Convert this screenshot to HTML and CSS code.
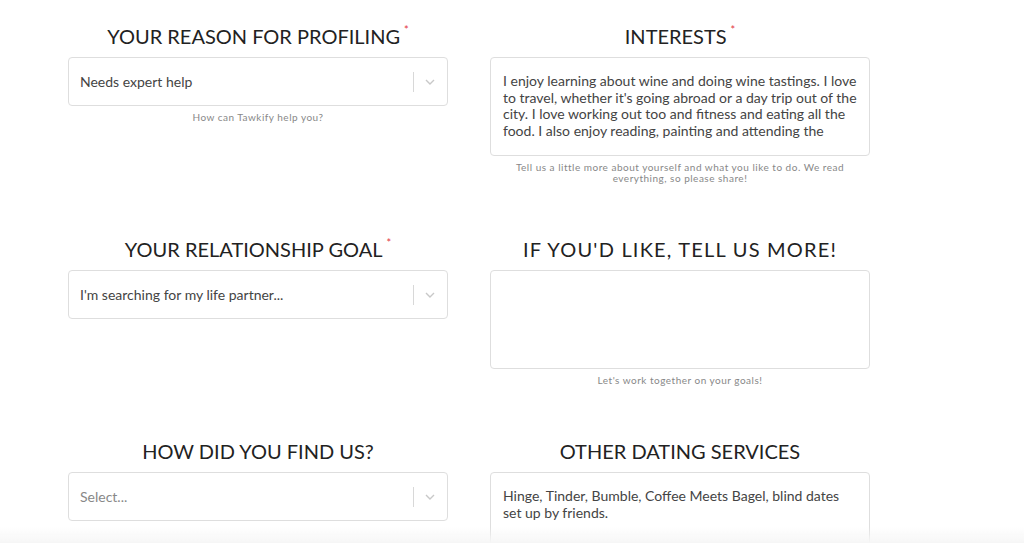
FILE: index.html
```html
<!DOCTYPE html>
<html lang="en">
<head>
  <meta charset="UTF-8">
  <title>Profile Details</title>
  <meta name="viewport" content="width=device-width, initial-scale=1.0">
  <link rel="stylesheet" href="styles.css">
</head>
<body>

  <form class="profile-form">
    <div class="field">
      <h2 class="label">YOUR REASON FOR PROFILING<span class="req">*</span></h2>
      <div class="select">
        <span class="select-value">Needs expert help</span>
        <span class="select-sep"></span>
        <svg class="chevron" width="10" height="6" viewBox="0 0 10 6"><path d="M1 1l4 4 4-4" fill="none" stroke="#c8c8c8" stroke-width="1.4"/></svg>
      </div>
      <p class="help">How can Tawkify help you?</p>
    </div>

    <div class="field">
      <h2 class="label">INTERESTS<span class="req">*</span></h2>
      <textarea class="area">I enjoy learning about wine and doing wine tastings. I love to travel, whether it's going abroad or a day trip out of the city. I love working out too and fitness and eating all the food. I also enjoy reading, painting and attending the</textarea>
      <p class="help">Tell us a little more about yourself and what you like to do. We read everything, so please share!</p>
    </div>

    <div class="field">
      <h2 class="label">YOUR RELATIONSHIP GOAL<span class="req">*</span></h2>
      <div class="select">
        <span class="select-value">I'm searching for my life partner...</span>
        <span class="select-sep"></span>
        <svg class="chevron" width="10" height="6" viewBox="0 0 10 6"><path d="M1 1l4 4 4-4" fill="none" stroke="#c8c8c8" stroke-width="1.4"/></svg>
      </div>
    </div>

    <div class="field">
      <h2 class="label wide">IF YOU'D LIKE, TELL US MORE!</h2>
      <textarea class="area"></textarea>
      <p class="help">Let's work together on your goals!</p>
    </div>

    <div class="field">
      <h2 class="label">HOW DID YOU FIND US?</h2>
      <div class="select">
        <span class="select-value placeholder">Select...</span>
        <span class="select-sep"></span>
        <svg class="chevron" width="10" height="6" viewBox="0 0 10 6"><path d="M1 1l4 4 4-4" fill="none" stroke="#c8c8c8" stroke-width="1.4"/></svg>
      </div>
    </div>

    <div class="field">
      <h2 class="label">OTHER DATING SERVICES</h2>
      <textarea class="area">Hinge, Tinder, Bumble, Coffee Meets Bagel, blind dates set up by friends.</textarea>
    </div>
  </form>

  <div class="fade"></div>

</body>
</html>
```

FILE: styles.css
```css
html, body {
  margin: 0;
  padding: 0;
  background: #fff;
  font-family: Lato, "Open Sans", sans-serif;
  color: #333;
  overflow: hidden;
}

.profile-form {
  display: grid;
  grid-template-columns: 380px 380px;
  column-gap: 42px;
  row-gap: 53px;
  padding: 24px 0 0 68px;
}

.field {
  display: flex;
  flex-direction: column;
}

.label {
  margin: 0 0 9px;
  font-size: 20px;
  font-weight: 400;
  line-height: 24px;
  text-align: center;
  color: #222;
  letter-spacing: 0;
}

.label.wide {
  letter-spacing: 1.2px;
}

.req {
  color: #e3343f;
  font-size: 11px;
  font-weight: 400;
  vertical-align: top;
  margin-left: 4px;
  line-height: 12px;
}

.select {
  display: flex;
  align-items: center;
  height: 47px;
  border: 1px solid #dedede;
  border-radius: 4px;
  padding: 0 12px 0 11px;
  font-size: 14px;
  color: #444;
}

.select-value {
  flex: 1;
}

.placeholder {
  color: #888;
}

.select-sep {
  width: 1px;
  height: 20px;
  background: #d8d8d8;
  margin-right: 11px;
}

.chevron {
  display: block;
}

.area {
  display: block;
  box-sizing: border-box;
  width: 380px;
  height: 99px;
  border: 1px solid #dedede;
  border-radius: 4px;
  padding: 15px 12px 0;
  font-family: Lato, "Open Sans", sans-serif;
  font-size: 14px;
  line-height: 16.5px;
  color: #444;
  resize: none;
  overflow: hidden;
}

.help {
  margin: 6px 20px 0;
  font-size: 10px;
  line-height: 11px;
  letter-spacing: 0.5px;
  text-align: center;
  color: #888;
}

.fade {
  position: fixed;
  left: 0;
  right: 0;
  bottom: 0;
  height: 16px;
  background: linear-gradient(rgba(245, 245, 245, 0), #f6f6f6);
}
```
